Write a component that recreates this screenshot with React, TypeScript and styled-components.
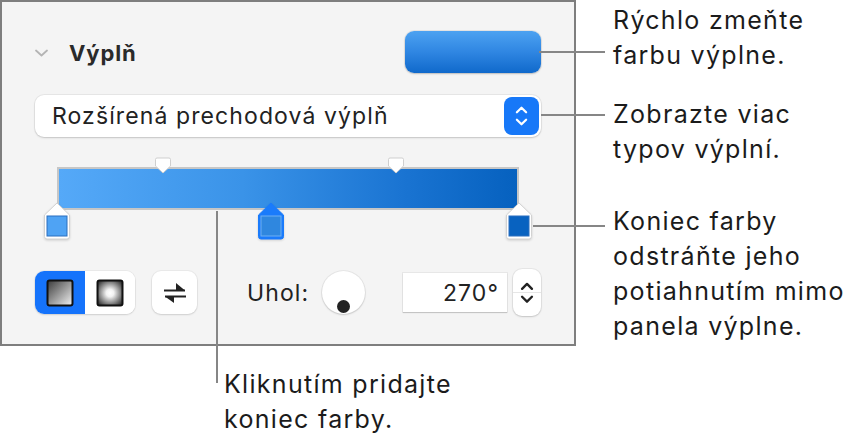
import styled, { createGlobalStyle } from "styled-components";

const GlobalStyle = createGlobalStyle`
  html, body {
    margin: 0;
    padding: 0;
    background: #fff;
  }
  * {
    box-sizing: border-box;
  }
`;

const Chevron = () => (
  <svg width="13" height="8" viewBox="0 0 13 8" fill="none">
    <path d="M1 1.5 L6.5 6.5 L12 1.5" stroke="#b4b4b4" strokeWidth="1.8" strokeLinecap="round" strokeLinejoin="round" />
  </svg>
);

const UpDown = ({ color, size }: { color: string; size: number }) => (
  <svg width={size} height={size * 1.6} viewBox="0 0 16 26" fill="none">
    <path d="M3 9 L8 4 L13 9" stroke={color} strokeWidth="2.4" strokeLinecap="round" strokeLinejoin="round" />
    <path d="M3 17 L8 22 L13 17" stroke={color} strokeWidth="2.4" strokeLinecap="round" strokeLinejoin="round" />
  </svg>
);

const TopMarker = () => (
  <svg width="17" height="17" viewBox="0 0 17 17">
    <path d="M2.5 1 H14.5 a1.5 1.5 0 0 1 1.5 1.5 V9 L8.5 16 L1 9 V2.5 a1.5 1.5 0 0 1 1.5 -1.5 Z" fill="#fff" stroke="#cfcfcf" strokeWidth="1" />
  </svg>
);

const Stop = ({ color, selected }: { color: string; selected?: boolean }) => (
  <svg width="27" height="38" viewBox="0 0 27 38">
    <path
      d="M1 13 L13.5 1 L26 13 V34.5 a2.5 2.5 0 0 1 -2.5 2.5 H3.5 a2.5 2.5 0 0 1 -2.5 -2.5 Z"
      fill={selected ? "#1a7bfb" : "#fff"}
      stroke={selected ? "#1a7bfb" : "#d2d2d2"}
      strokeWidth="1"
    />
    <rect x="3.5" y="14" width="20" height="20" fill={color} stroke={selected ? "#6fb0f4" : "#2a6fbf"} strokeWidth="1" />
  </svg>
);

const LinearIcon = () => (
  <svg width="28" height="28" viewBox="0 0 28 28">
    <defs>
      <linearGradient id="lin" x1="0" y1="0" x2="1" y2="1">
        <stop offset="0" stopColor="#3a3a3a" />
        <stop offset="1" stopColor="#f4f4f4" />
      </linearGradient>
    </defs>
    <rect x="1.5" y="1.5" width="25" height="25" rx="2" fill="url(#lin)" stroke="#111" strokeWidth="2" />
  </svg>
);

const RadialIcon = () => (
  <svg width="28" height="28" viewBox="0 0 28 28">
    <defs>
      <radialGradient id="rad" cx="0.5" cy="0.5" r="0.6">
        <stop offset="0" stopColor="#ffffff" />
        <stop offset="0.25" stopColor="#f2f2f2" />
        <stop offset="1" stopColor="#3c3c3c" />
      </radialGradient>
    </defs>
    <rect x="1.5" y="1.5" width="25" height="25" rx="2" fill="url(#rad)" stroke="#111" strokeWidth="2" />
  </svg>
);

const SwapIcon = () => (
  <svg width="24" height="22" viewBox="0 0 24 22">
    <path d="M1 8.5 H22" stroke="#222" strokeWidth="2" />
    <path d="M13 1 L22 8.5 L13 8.5 Z" fill="#222" />
    <path d="M2 14.5 H23" stroke="#222" strokeWidth="2" />
    <path d="M11 21 L2 14.5 L11 14.5 Z" fill="#222" />
  </svg>
);

const App = () => {
  return (
    <Stage>
      <GlobalStyle />
      <Panel>
        <HeaderRow>
          <TitleGroup>
            <Chevron />
            <Title>Výplň</Title>
          </TitleGroup>
          <ColorWell />
        </HeaderRow>

        <Popup>
          <PopupText>Rozšírená prechodová výplň</PopupText>
          <PopupStepper>
            <UpDown color="#fff" size={15} />
          </PopupStepper>
        </Popup>

        <GradientArea>
          <GradientBar />
          <Marker $pos={23}>
            <TopMarker />
          </Marker>
          <Marker $pos={73.4}>
            <TopMarker />
          </Marker>
          <StopPin $pos={0}>
            <Stop color="#4fa3f4" />
          </StopPin>
          <StopPin $pos={46.4}>
            <Stop color="#2f87df" selected />
          </StopPin>
          <StopPin $pos={100}>
            <Stop color="#0862c0" />
          </StopPin>
        </GradientArea>

        <ControlsRow>
          <Segmented>
            <Segment $active>
              <LinearIcon />
            </Segment>
            <Segment>
              <RadialIcon />
            </Segment>
          </Segmented>
          <SwapButton>
            <SwapIcon />
          </SwapButton>
          <AngleLabel>Uhol:</AngleLabel>
          <Dial>
            <DialDot />
          </Dial>
          <AngleField>270°</AngleField>
          <Stepper>
            <UpDown color="#222" size={16} />
          </Stepper>
        </ControlsRow>
      </Panel>

      <Leader $x={539} $y={51} $w={66} />
      <Leader $x={541} $y={114} $w={64} />
      <Leader $x={533} $y={225} $w={72} />
      <VLeader $x={216} $y={211} $h={172} />

      <Callout $x={613} $y={3}>
        Rýchlo zmeňte
        <br />
        farbu výplne.
      </Callout>
      <Callout $x={613} $y={97}>
        Zobrazte viac
        <br />
        typov výplní.
      </Callout>
      <Callout $x={613} $y={204}>
        Koniec farby
        <br />
        odstráňte jeho
        <br />
        potiahnutím mimo
        <br />
        panela výplne.
      </Callout>
      <Callout $x={224} $y={367}>
        Kliknutím pridajte
        <br />
        koniec farby.
      </Callout>
    </Stage>
  );
};

const Stage = styled.div`
  position: relative;
  width: 857px;
  height: 439px;
  overflow: hidden;
  background: #fff;
  font-family: Inter, "Noto Sans", sans-serif;
`;

const Panel = styled.div`
  width: 576px;
  height: 346px;
  border: 2px solid #7e7e7e;
  background: #f4f4f4;
  padding: 29px 33px 0 33px;
  display: flex;
  flex-direction: column;
`;

const HeaderRow = styled.div`
  height: 42px;
  display: flex;
  align-items: center;
  justify-content: space-between;
`;

const TitleGroup = styled.div`
  display: flex;
  align-items: center;
  gap: 21px;
  padding-top: 2px;
`;

const Title = styled.span`
  font-size: 22px;
  font-weight: 700;
  color: #2a2a2a;
  letter-spacing: 0.9px;
`;

const ColorWell = styled.div`
  width: 136px;
  height: 42px;
  border-radius: 9px;
  background: linear-gradient(180deg, #4da2f1 0%, #2f86e2 50%, #1069cb 100%);
  box-shadow: 0 0 0 1px rgba(0, 0, 0, 0.06), 0 1px 2px rgba(0, 0, 0, 0.18);
`;

const Popup = styled.div`
  margin-top: 22px;
  height: 42px;
  border-radius: 9px;
  background: #fff;
  box-shadow: 0 0 0 1px rgba(0, 0, 0, 0.05), 0 1px 2px rgba(0, 0, 0, 0.15);
  display: flex;
  align-items: center;
  justify-content: space-between;
  padding: 0 2px 0 17px;
`;

const PopupText = styled.span`
  font-size: 23px;
  letter-spacing: 1.1px;
  color: #222;
`;

const PopupStepper = styled.div`
  width: 35px;
  height: 38px;
  border-radius: 8px;
  background: #1778f8;
  display: flex;
  align-items: center;
  justify-content: center;
`;

const GradientArea = styled.div`
  position: relative;
  margin: 30px 0 0 22px;
  width: 462px;
  height: 43px;
`;

const GradientBar = styled.div`
  width: 100%;
  height: 100%;
  border: 2px solid #c6c6c6;
  background: linear-gradient(90deg, #55a9f8 0%, #3a93e8 40%, #1a74d2 75%, #0661bf 100%);
`;

const Marker = styled.div<{ $pos: number }>`
  position: absolute;
  top: -10px;
  left: ${({ $pos }) => $pos}%;
  transform: translateX(-50%);
  display: flex;
`;

const StopPin = styled.div<{ $pos: number }>`
  position: absolute;
  top: 35px;
  left: ${({ $pos }) => $pos}%;
  transform: translateX(-50%);
  display: flex;
  filter: drop-shadow(0 1px 1px rgba(0, 0, 0, 0.15));
`;

const ControlsRow = styled.div`
  margin-top: 61px;
  height: 43px;
  display: flex;
  align-items: center;
`;

const Segmented = styled.div`
  width: 100px;
  height: 43px;
  border-radius: 9px;
  overflow: hidden;
  display: flex;
  background: #fff;
  box-shadow: 0 0 0 1px rgba(0, 0, 0, 0.04), 0 1px 2px rgba(0, 0, 0, 0.12);
`;

const Segment = styled.div<{ $active?: boolean }>`
  flex: 1;
  display: flex;
  align-items: center;
  justify-content: center;
  background: ${({ $active }) => ($active ? "#1573fb" : "#fff")};
`;

const SwapButton = styled.div`
  margin-left: 17px;
  width: 45px;
  height: 43px;
  border-radius: 9px;
  background: #fff;
  box-shadow: 0 0 0 1px rgba(0, 0, 0, 0.04), 0 1px 2px rgba(0, 0, 0, 0.12);
  display: flex;
  align-items: center;
  justify-content: center;
`;

const AngleLabel = styled.span`
  margin-left: 50px;
  width: 65px;
  font-size: 23px;
  letter-spacing: 1.1px;
  color: #222;
`;

const Dial = styled.div`
  position: relative;
  margin-left: 10px;
  width: 43px;
  height: 43px;
  border-radius: 50%;
  background: #fff;
  box-shadow: 0 0 0 1px rgba(0, 0, 0, 0.05), 0 1px 2px rgba(0, 0, 0, 0.15);
`;

const DialDot = styled.div`
  position: absolute;
  left: 15px;
  bottom: 1px;
  width: 13px;
  height: 13px;
  border-radius: 50%;
  background: #222;
`;

const AngleField = styled.div`
  margin-left: 38px;
  width: 104px;
  height: 39px;
  background: #fff;
  box-shadow: 0 0 0 1px rgba(0, 0, 0, 0.05), 0 1px 1px rgba(0, 0, 0, 0.15);
  display: flex;
  align-items: center;
  justify-content: flex-end;
  padding-right: 8px;
  font-size: 23px;
  letter-spacing: 1.1px;
  color: #222;
`;

const Stepper = styled.div`
  margin-left: 6px;
  width: 28px;
  height: 47px;
  border-radius: 9px;
  background: #fff;
  box-shadow: 0 0 0 1px rgba(0, 0, 0, 0.05), 0 1px 2px rgba(0, 0, 0, 0.15);
  display: flex;
  align-items: center;
  justify-content: center;
  background-image: linear-gradient(#e6e6e6, #e6e6e6);
  background-size: 100% 1px;
  background-position: center;
  background-repeat: no-repeat;
`;

const Leader = styled.div<{ $x: number; $y: number; $w: number }>`
  position: absolute;
  left: ${({ $x }) => $x}px;
  top: ${({ $y }) => $y}px;
  width: ${({ $w }) => $w}px;
  height: 2px;
  background: #868686;
`;

const VLeader = styled.div<{ $x: number; $y: number; $h: number }>`
  position: absolute;
  left: ${({ $x }) => $x}px;
  top: ${({ $y }) => $y}px;
  width: 2px;
  height: ${({ $h }) => $h}px;
  background: #868686;
`;

const Callout = styled.div<{ $x: number; $y: number }>`
  position: absolute;
  left: ${({ $x }) => $x}px;
  top: ${({ $y }) => $y}px;
  font-size: 25px;
  letter-spacing: 1.3px;
  line-height: 35px;
  color: #1b1b1b;
  white-space: nowrap;
`;

export default App;
